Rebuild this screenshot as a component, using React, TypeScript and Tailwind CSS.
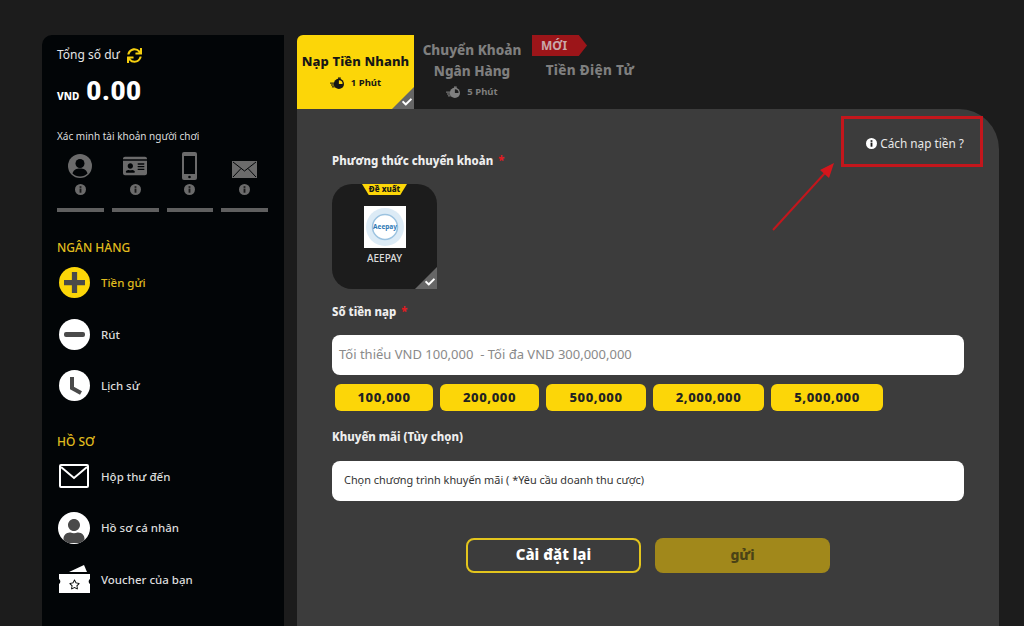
import React from 'react';
import { FaSync, FaIdCard, FaUser, FaRegStar, FaCheck } from 'react-icons/fa';

const FONT = "font-['Noto_Sans',sans-serif]";

const AMOUNTS = [
  { label: '100,000', width: 'w-[98px]' },
  { label: '200,000', width: 'w-[99px]' },
  { label: '500,000', width: 'w-[100px]' },
  { label: '2,000,000', width: 'w-[111px]' },
  { label: '5,000,000', width: 'w-[112px]' },
];

const Info = ({ className }: { className: string }) => (
  <svg viewBox="0 0 12 12" className={className}>
    <circle cx="6" cy="6" r="6" fill="currentColor" />
    <rect x="5" y="5" width="2" height="4.500" fill="#1a1a1a" />
    <rect x="5" y="2.400" width="2" height="1.800" fill="#1a1a1a" />
  </svg>
);

const Timer = ({ className, cut }: { className: string; cut: string }) => (
  <svg viewBox="0 0 16 14" className={className}>
    <circle cx="9.500" cy="7.500" r="5.500" fill="currentColor" />
    <path d="M9.500 7.500V3.500a4 4 0 0 1 4 4z" fill={cut} />
    <rect x="8.500" y="0.500" width="3" height="1.500" fill="currentColor" />
    <rect x="0" y="6" width="4.500" height="1.200" fill="currentColor" />
    <rect x="1" y="8" width="3.500" height="1.200" fill="currentColor" />
    <rect x="2" y="10" width="3" height="1.200" fill="currentColor" />
  </svg>
);

const Corner = ({ size }: { size: string }) => (
  <div className={`absolute right-0 bottom-0 ${size} bg-[#666666] [clip-path:polygon(100%_0,100%_100%,0_100%)] flex items-end justify-end pr-[2px] pb-[2px] text-white`}>
    <FaCheck className="w-[10px] h-[10px]" />
  </div>
);

const VerifyItem = ({ children }: { children: React.ReactNode }) => (
  <div className="w-[47px] flex flex-col items-center">
    <div className="h-[32px] flex items-center justify-center text-[#6b6b6b]">{children}</div>
    <Info className="w-[11px] h-[11px] text-[#6b6b6b] mt-[2px]" />
    <div className="w-full h-[4px] bg-[#5f5f5f] mt-[13px]" />
  </div>
);

const NavItem = ({ icon, label, active }: { icon: React.ReactNode; label: string; active?: boolean }) => (
  <div className="h-[51.5px] flex items-center">
    <div className="w-[36px] ml-[-1px] mr-[9px] flex justify-center">{icon}</div>
    <span className={`text-[11.500px] font-medium ${active ? 'text-[#e0bd1e]' : 'text-[#dcdcdc]'}`}>{label}</span>
  </div>
);

const Sidebar = () => (
  <aside className="w-[242px] shrink-0 bg-[#020507] rounded-tl-[10px] pl-[15px] pr-[16px] pt-[12px]">
    <div className="flex items-center gap-[7px] h-[16px] text-[12px] text-[#e6e6e6]">
      Tổng số dư
      <FaSync className="w-[15px] h-[15px] text-[#f5cf0f]" />
    </div>
    <div className="flex items-baseline gap-[7px] mt-[13px] h-[30px] text-white font-bold">
      <span className="text-[10px] font-extrabold">VND</span>
      <span className="text-[26px] leading-[30px] tracking-[0.6px] font-black font-['Roboto',sans-serif]">0.00</span>
    </div>
    <div className="mt-[23px] h-[14px] text-[10px] leading-[14px] text-[#dddddd]">Xác minh tài khoản người chơi</div>
    <div className="flex gap-[8px] mt-[7px]">
      <VerifyItem>
        <svg viewBox="0 0 24 24" className="w-[24px] h-[24px]">
          <circle cx="12" cy="12" r="12" fill="currentColor" />
          <circle cx="12" cy="9.500" r="4.500" fill="#020507" />
          <path d="M4.500 19.500c1-4 4-5 7.500-5s6.500 1 7.500 5c-2 2-4.500 3-7.500 3s-5.500-1-7.500-3z" fill="#020507" />
        </svg>
      </VerifyItem>
      <VerifyItem>
        <FaIdCard className="w-[24px] h-[24px]" />
      </VerifyItem>
      <VerifyItem>
        <svg viewBox="0 0 15 28" className="w-[15px] h-[28px]">
          <rect width="15" height="28" rx="2" fill="currentColor" />
          <rect x="2" y="4" width="11" height="18" fill="#020507" />
          <circle cx="7.500" cy="25" r="1.300" fill="#020507" />
        </svg>
      </VerifyItem>
      <VerifyItem>
        <svg viewBox="0 0 25 17" className="w-[25px] h-[17px] mt-[7px]">
          <rect width="25" height="17" fill="currentColor" />
          <path d="M1 1l11.500 9L24 1M1 16l8-8.500M24 16l-8-8.500" fill="none" stroke="#020507" strokeWidth="1" />
        </svg>
      </VerifyItem>
    </div>

    <div className="mt-[28px] h-[16px] text-[12px] leading-[16px] text-[#e0bd1e] font-medium">NGÂN HÀNG</div>
    <div className="mt-[1px]">
      <NavItem
        active
        label="Tiền gửi"
        icon={
          <div className="w-[31px] h-[31px] rounded-full bg-[#fcd608] flex items-center justify-center">
            <svg viewBox="0 0 20 20" className="w-[21px] h-[21px]">
              <path d="M7.500 0h5v7.500H20v5h-7.500V20h-5v-7.500H0v-5h7.500z" fill="#4a4a4a" />
            </svg>
          </div>
        }
      />
      <NavItem
        label="Rút"
        icon={
          <div className="w-[31px] h-[31px] rounded-full bg-white flex items-center justify-center">
            <div className="w-[21px] h-[5px] rounded-[2px] bg-[#4a4a4a]" />
          </div>
        }
      />
      <NavItem
        label="Lịch sử"
        icon={
          <svg viewBox="0 0 31 31" className="w-[31px] h-[31px]">
            <circle cx="15.500" cy="15.500" r="15.500" fill="white" />
            <path d="M13 7v11l9 5" fill="none" stroke="#4a4a4a" strokeWidth="4" />
          </svg>
        }
      />
    </div>

    <div className="mt-[22px] h-[16px] text-[12px] leading-[16px] text-[#e0bd1e] font-medium">HỒ SƠ</div>
    <div className="mt-[1px]">
      <NavItem
        label="Hộp thư đến"
        icon={
          <svg viewBox="0 0 30 24" className="w-[30px] h-[24px]">
            <rect x="1" y="1" width="28" height="22" rx="1" fill="none" stroke="white" strokeWidth="2" />
            <path d="M2 3l13 11L28 3" fill="none" stroke="white" strokeWidth="2" />
          </svg>
        }
      />
      <NavItem
        label="Hồ sơ cá nhân"
        icon={
          <div className="w-[32px] h-[32px] rounded-full bg-white overflow-hidden flex items-center justify-center">
            <FaUser className="w-[24px] h-[24px] mt-[6px] text-[#4a4a4a]" />
          </div>
        }
      />
      <NavItem
        label="Voucher của bạn"
        icon={
          <div className="relative w-[31px] h-[30px]">
            <svg viewBox="0 0 31 30" className="w-[31px] h-[30px]">
              <path d="M10 8l15-7 3 7z" fill="white" />
              <path d="M0 10h31v5a3 3 0 0 0 0 5v9H0v-9a3 3 0 0 0 0-5z" fill="white" />
            </svg>
            <FaRegStar className="absolute left-[10px] top-[15px] w-[11px] h-[11px] text-[#020507]" />
          </div>
        }
      />
    </div>
  </aside>
);

const Tabs = () => (
  <div className="flex h-[74px] shrink-0">
    <div className="relative w-[117px] bg-[#fcd608] rounded-tl-[6px] flex flex-col items-center pt-[17px] text-[#161616]">
      <span className="text-[13px] leading-[18px] font-extrabold whitespace-nowrap tracking-[0.1px]">Nạp Tiền Nhanh</span>
      <span className="flex items-center gap-[6px] mt-[6px] text-[9.500px] font-bold">
        <Timer className="w-[15px] h-[13px]" cut="#fcd608" />1 Phút
      </span>
      <Corner size="w-[22px] h-[22px]" />
    </div>
    <div className="w-[116px] flex flex-col items-center pt-[5px] text-[#7f7f7f] font-extrabold text-[13.500px] leading-[21px]">
      <span className="whitespace-nowrap">Chuyển Khoản</span>
      <span className="whitespace-nowrap">Ngân Hàng</span>
      <span className="flex items-center gap-[6px] mt-[1px] text-[9.500px] leading-[18px] font-bold">
        <Timer className="w-[15px] h-[13px]" cut="#1c1c1c" />5 Phút
      </span>
    </div>
    <div className="relative w-[120px] flex justify-center pt-[25px] text-[#7f7f7f] font-extrabold text-[13.500px] tracking-[0.3px] leading-[21px]">
      <span className="whitespace-nowrap">Tiền Điện Tử</span>
      <div className="absolute left-[2px] top-0 w-[55px] h-[21px] bg-[#9c1519] text-[#c9a9a9] text-[12px] tracking-normal font-bold pl-[9px] leading-[21px] [clip-path:polygon(0_0,85%_0,100%_50%,85%_100%,0_100%)]">
        MỚI
      </div>
    </div>
  </div>
);

const Label = ({ text, required }: { text: string; required?: boolean }) => (
  <div className="h-[16px] text-[11.400px] leading-[16px] font-extrabold text-[#eeeeee]">
    {text}
    {required && <span className="text-[#e01b22] ml-[5px]">*</span>}
  </div>
);

const Panel = () => (
  <div className="relative flex-1 bg-[#3c3c3c] rounded-tr-[40px] pl-[35px] pr-[35px] pt-[44px]">
    <Label text="Phương thức chuyển khoản" required />
    <div className="relative w-[105px] h-[105px] mt-[15px] bg-[#1c1c1c] rounded-[20px] flex flex-col items-center pt-[22px]">
      <div className="absolute top-0 left-[30px] w-[45px] h-[11px] bg-[#fcd608] text-[#161616] text-[8px] leading-[10px] font-extrabold text-center [clip-path:polygon(0_0,100%_0,85%_100%,15%_100%)]">
        Đề xuất
      </div>
      <svg viewBox="0 0 42 42" className="w-[42px] h-[42px] bg-white">
        <circle cx="21" cy="21" r="19" fill="#dcebf6" />
        <circle cx="21" cy="21" r="12.500" fill="white" stroke="#9cc3e0" strokeWidth="1.500" />
        <text x="21" y="23" textAnchor="middle" fontSize="6.500" fontWeight="700" fill="#2f79b5">Aeepay</text>
      </svg>
      <span className="mt-[3px] text-[10px] leading-[14px] font-medium text-[#dddddd]">AEEPAY</span>
      <Corner size="w-[22px] h-[22px]" />
    </div>

    <div className="mt-[15px]">
      <Label text="Số tiền nạp" required />
    </div>
    <div className="mt-[15px] h-[40px] bg-white rounded-[8px] flex items-center pl-[7px] text-[13px] text-[#8a8a8a]">
      Tối thiểu VND 100,000&nbsp; - Tối đa VND 300,000,000
    </div>
    <div className="flex gap-[7px] mt-[9px] ml-[3px]">
      {AMOUNTS.map((a) => (
        <div key={a.label} className={`${a.width} h-[27px] rounded-[6px] bg-[#fcd608] flex items-center justify-center text-[13px] font-extrabold tracking-[0.6px] text-[#222222]`}>
          {a.label}
        </div>
      ))}
    </div>

    <div className="mt-[18px]">
      <Label text="Khuyến mãi (Tùy chọn)" />
    </div>
    <div className="mt-[16px] h-[40px] bg-white rounded-[8px] flex items-center pl-[12px] pb-[2px] text-[10.900px] text-[#333333]">
      Chọn chương trình khuyến mãi ( *Yêu cầu doanh thu cược)
    </div>
    <div className="flex gap-[14px] mt-[37px] ml-[134px]">
      <div className="w-[175px] h-[35px] rounded-[8px] border-2 border-[#e3c51d] flex items-center justify-center pb-[3px] text-[15px] font-extrabold text-white">
        Cài đặt lại
      </div>
      <div className="w-[175px] h-[35px] rounded-[8px] bg-[#a1881b] flex items-center justify-center pb-[3px] text-[14px] font-extrabold text-[#4a4216]">
        gửi
      </div>
    </div>

    {/* chu thich mau do ve tren anh */}
    <div className="absolute left-[544px] top-[7px] w-[142px] h-[51px] border-[3px] border-[#c3161c] flex items-center justify-end pr-[16px] pt-[4px] text-[11.800px] text-[#e8e8e8]">
      <Info className="w-[11px] h-[11px] text-white mr-[3px]" />
      Cách nạp tiền ?
    </div>
    <svg viewBox="0 0 70 75" className="absolute left-[472px] top-[50px] w-[70px] h-[75px]">
      <path d="M4 71L56 14" stroke="#c3161c" strokeWidth="2" />
      <path d="M65 4L60 19 51 11z" fill="#d5161c" />
    </svg>
  </div>
);

export default function App() {
  return (
    <div className={`${FONT} w-[1024px] h-[626px] overflow-hidden bg-[#1c1c1c] flex pt-[35px] pl-[42px] gap-[13px]`}>
      <Sidebar />
      <main className="w-[702px] flex flex-col">
        <Tabs />
        <Panel />
      </main>
    </div>
  );
}
